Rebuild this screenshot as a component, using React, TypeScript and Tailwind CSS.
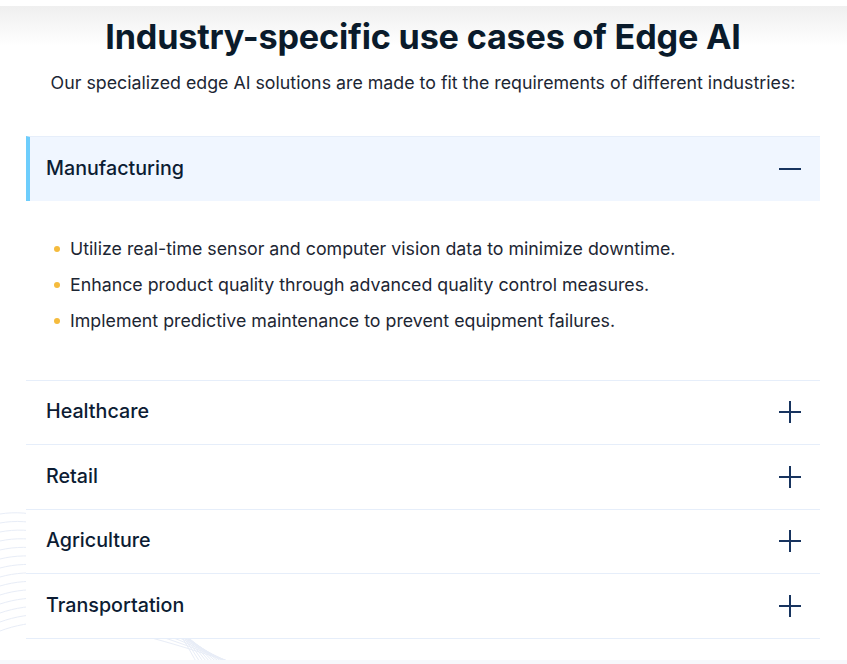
import { useState } from "react";

const items = [
  {
    title: "Manufacturing",
    points: [
      "Utilize real-time sensor and computer vision data to minimize downtime.",
      "Enhance product quality through advanced quality control measures.",
      "Implement predictive maintenance to prevent equipment failures.",
    ],
  },
  { title: "Healthcare", points: [] },
  { title: "Retail", points: [] },
  { title: "Agriculture", points: [] },
  { title: "Transportation", points: [] },
];

function Icon({ open }: { open: boolean }) {
  return (
    <svg width="24" height="24" viewBox="0 0 24 24" className="text-[#17345f]">
      <path d="M1 12h22" stroke="currentColor" strokeWidth="2" />
      {!open && <path d="M12 1v22" stroke="currentColor" strokeWidth="2" />}
    </svg>
  );
}

function Waves() {
  const lines = Array.from({ length: 14 }, (_, i) => i);
  return (
    <svg
      className="absolute left-0 bottom-0 pointer-events-none"
      width="260"
      height="170"
      viewBox="0 0 260 170"
      fill="none"
    >
      {lines.map((i) => (
        <path
          key={i}
          d={`M0 ${20 + i * 9} C 60 ${10 + i * 8}, 140 ${60 + i * 6}, ${200 + i * 4} 175`}
          stroke="#e8edf7"
          strokeWidth="1"
        />
      ))}
    </svg>
  );
}

export default function App() {
  const [open, setOpen] = useState(0);

  return (
    <div
      className="relative min-h-[664px] bg-white overflow-hidden text-[#0b1a2c]"
      style={{ fontFamily: "Inter, 'Noto Sans', sans-serif" }}
    >
      <div className="h-[6px] bg-white" />
      <div className="absolute left-0 right-0 top-[6px] h-[40px] bg-gradient-to-b from-[#efefef] to-white" />
      <Waves />
      <div className="absolute left-0 right-0 bottom-0 h-[4px] bg-[#f7f8fc]" />

      <div className="relative px-[26px] pr-[27px]">
        <h1 className="text-center text-[34.2px] leading-[44px] font-bold tracking-[-0.2px] text-[#0a1b2b] pt-[9px]">
          Industry-specific use cases of Edge AI
        </h1>
        <p className="text-center text-[17.8px] leading-[26px] mt-[11px] text-[#1c2633]">
          Our specialized edge AI solutions are made to fit the requirements of different industries:
        </p>

        <div className="mt-[40px]">
          {items.map((it, idx) => {
            const isOpen = open === idx;
            return (
              <div key={it.title}>
                <button
                  onClick={() => setOpen(isOpen ? -1 : idx)}
                  className={
                    "w-full h-[64.5px] flex items-center justify-between pr-[18px] border-t border-[#e6eefa] text-left " +
                    (isOpen ? "bg-[#f0f6ff] border-l-4 border-l-[#6dcdfc] pl-[16px]" : "bg-white pl-[20px]")
                  }
                >
                  <span className="text-[19.7px] font-medium text-[#0c1c33]">{it.title}</span>
                  <Icon open={isOpen} />
                </button>
                {isOpen && (
                  <ul className="pt-[35px] pb-[46px] pl-[28px] flex flex-col gap-[10px]">
                    {it.points.map((p) => (
                      <li key={p} className="flex items-center gap-[10px] text-[17.8px] leading-[26px] text-[#1d2633]">
                        <span className="w-[6px] h-[6px] rounded-full bg-[#f5bb3d] shrink-0" />
                        {p}
                      </li>
                    ))}
                  </ul>
                )}
              </div>
            );
          })}
          <div className="border-t border-[#e6eefa]" />
        </div>
      </div>
    </div>
  );
}
